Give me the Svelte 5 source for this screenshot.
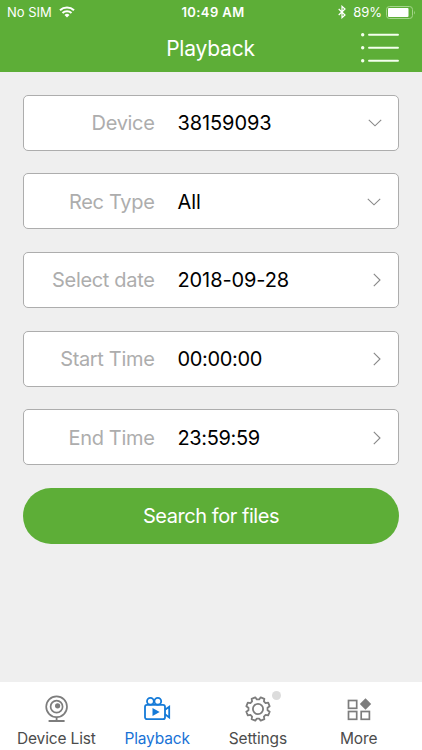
<script lang="ts">
  interface Field {
    label: string;
    value: string;
    kind: 'select' | 'date' | 'time';
  }

  const fields: Field[] = [
    { label: 'Device', value: '38159093', kind: 'select' },
    { label: 'Rec Type', value: 'All', kind: 'select' },
    { label: 'Select date', value: '2018-09-28', kind: 'date' },
    { label: 'Start Time', value: '00:00:00', kind: 'time' },
    { label: 'End Time', value: '23:59:59', kind: 'time' },
  ];

  const tabs = [
    { id: 'devices', label: 'Device List' },
    { id: 'playback', label: 'Playback' },
    { id: 'settings', label: 'Settings', badge: true },
    { id: 'more', label: 'More' },
  ];

  let active = $state('playback');

  // Outline of an eight-toothed gear centred on 14,14
  function gearPath() {
    const points: string[] = [];
    for (let i = 0; i < 8; i++) {
      const mid = 22.5 + i * 45;
      for (const [offset, r] of [[-15.5, 9.6], [-9.5, 12], [9.5, 12], [15.5, 9.6]]) {
        const a = ((mid + offset) * Math.PI) / 180;
        points.push(`${(14 + r * Math.cos(a)).toFixed(2)} ${(14 + r * Math.sin(a)).toFixed(2)}`);
      }
    }
    return `M${points.join('L')}Z`;
  }
</script>

<div class="screen">
  <header>
    <div class="status">
      <div class="carrier">
        <span>No SIM</span>
        <svg width="16" height="12" viewBox="0 0 16 12" fill="none" stroke="#fff" stroke-width="2.1">
          <path d="M1 4.2A10.3 10.3 0 0 1 15 4.2M3.5 7A6.6 6.6 0 0 1 12.5 7" />
          <path d="M8 11.5 5.5 9A3.6 3.6 0 0 1 10.5 9Z" fill="#fff" stroke="none" />
        </svg>
      </div>
      <span class="clock">10:49 AM</span>
      <div class="power">
        <svg width="8" height="14" viewBox="0 0 8 14" fill="none" stroke="#fff" stroke-width="1.2">
          <path d="M.7 4 7 10 4 12.7V1.3L7 4 .7 10" />
        </svg>
        <span>89%</span>
        <svg class="battery" width="30" height="13" viewBox="0 0 30 13">
          <rect x=".5" y=".5" width="26" height="12" rx="3" fill="none" stroke="#a4d58b" />
          <rect x="2" y="2" width="20.5" height="9" rx="1" fill="#fff" />
          <path d="M28 4.5q1.6 2 0 4Z" fill="#a4d58b" />
        </svg>
      </div>
    </div>
    <div class="title-bar">
      <h1>Playback</h1>
      <button class="menu" aria-label="Menu">
        <svg width="40" height="30" viewBox="0 0 40 30" stroke="#f4ffed" stroke-width="1.9" stroke-linecap="round">
          <path d="M9 1.7H38M9 14.7H38M9 27.7H38" />
          <path d="M2.7 1.7h.01M2.7 14.7h.01M2.7 27.7h.01" stroke-width="3.4" />
        </svg>
      </button>
    </div>
  </header>

  <main>
    {#each fields as field, i}
      <div class="field">
        <span class="label">{field.label}</span>
        <span class="value" class:time={field.kind === 'time'}>{field.value}</span>
        {#if field.kind === 'select'}
          <svg class="down" class:inset={i === 1} width="14" height="8" viewBox="0 0 14 8">
            <path d="M.8.8 7 6.8 13.2.8" />
          </svg>
        {:else}
          <svg width="8" height="14" viewBox="0 0 8 14">
            <path d="M.8.8 7 7 .8 13.2" />
          </svg>
        {/if}
      </div>
    {/each}
    <button class="search">Search for files</button>
  </main>

  <nav>
    {#each tabs as tab}
      <button class="tab" class:active={active === tab.id} onclick={() => (active = tab.id)}>
        <span class="icon">
          <svg width="28" height="28" viewBox="0 0 28 28" fill="none" stroke="currentColor" stroke-width="1.8">
            {#if tab.id === 'devices'}
              <circle cx="14.6" cy="11.7" r="10.4" stroke-width="1.7" />
              <circle cx="14.6" cy="11.7" r="6" stroke-width="1.7" />
              <circle cx="15.6" cy="10.8" r="2.6" fill="currentColor" stroke="none" />
              <path d="M14.6 22v4M6.6 26h16" />
            {:else if tab.id === 'playback'}
              <circle cx="7.4" cy="6.2" r="3.4" />
              <circle cx="14.8" cy="6.2" r="3.4" />
              <rect x="2" y="9.8" width="20" height="14.4" rx="2" />
              <path d="M22 14.8 26.2 11.8v10.6L22 19.2" />
              <path d="M9.5 12.9v8.2l7.2-4.1Z" fill="currentColor" stroke="none" />
            {:else if tab.id === 'settings'}
              <path d={gearPath()} stroke-linejoin="round" />
              <circle cx="14" cy="14" r="5.1" />
            {:else}
              <rect x="3.5" y="5.5" width="8.2" height="7.8" stroke-width="1.7" />
              <rect x="3.5" y="16.5" width="8.2" height="7.8" stroke-width="1.7" />
              <rect x="16.2" y="16.5" width="8.2" height="7.8" stroke-width="1.7" />
              <path d="M20.5 3.2 26.2 9l-5.7 5.8L14.8 9Z" fill="currentColor" stroke="none" />
            {/if}
          </svg>
          {#if tab.badge}
            <i class="badge"></i>
          {/if}
        </span>
        <span class="tab-label">{tab.label}</span>
      </button>
    {/each}
  </nav>
</div>

<style>
  :global(body) {
    background: #efefef;
  }

  .screen {
    width: 422px;
    height: 750px;
    display: flex;
    flex-direction: column;
    background: #efefef;
    font-family: Inter, "Liberation Sans", sans-serif;
    overflow: hidden;
  }

  button {
    padding: 0;
    border: 0;
    background: none;
    font: inherit;
  }

  svg {
    display: block;
    flex-shrink: 0;
  }

  header {
    height: 72px;
    flex-shrink: 0;
    background: #5dae37;
    color: #fff;
  }

  .status {
    height: 24px;
    padding: 0 7px;
    display: grid;
    grid-template-columns: 1fr auto 1fr;
    align-items: center;
    font-size: 13px;
  }

  .carrier, .power {
    display: flex;
    align-items: center;
    gap: 7px;
  }

  .clock {
    padding-left: 4px;
    font-weight: 600;
    letter-spacing: 0.4px;
  }

  .power {
    justify-content: flex-end;
    margin-right: -1px;
  }

  .battery {
    margin-left: -3px;
  }

  .title-bar {
    height: 48px;
    display: grid;
    grid-template-columns: 1fr auto 1fr;
    align-items: center;
  }

  h1 {
    grid-column: 2;
    margin: 0;
    padding-right: 1px;
    font-size: 21px;
    font-weight: 400;
    letter-spacing: -0.2px;
  }

  .menu {
    justify-self: end;
    margin-right: 22px;
  }

  main {
    flex: 1;
    padding: 22.7px 23px 0;
    display: flex;
    flex-direction: column;
    gap: 22.65px;
  }

  .field {
    height: 56px;
    box-sizing: border-box;
    padding: 0.6px 17px 0 0;
    display: flex;
    align-items: center;
    border: 1px solid #adadad;
    border-radius: 5px;
    background: #fff;
    font-size: 20px;
  }

  .label {
    width: 130.5px;
    margin-right: 23px;
    text-align: right;
    letter-spacing: -0.33px;
    color: #adadad;
  }

  .value {
    flex: 1;
    letter-spacing: -0.1px;
    color: #000;
  }

  .value.time {
    letter-spacing: -0.35px;
  }

  .field svg {
    fill: none;
    stroke: #888;
    stroke-width: 1.1;
  }

  .down {
    margin-right: -1px;
  }

  .down.inset {
    margin-right: 0;
  }

  .search {
    height: 56px;
    flex-shrink: 0;
    border-radius: 28px;
    background: #5dae37;
    color: #fff;
    font-size: 20px;
    letter-spacing: -0.45px;
  }

  nav {
    height: 68px;
    flex-shrink: 0;
    padding: 0 13px 0 6px;
    display: grid;
    grid-template-columns: repeat(4, 1fr);
    background: #fff;
  }

  .tab {
    display: flex;
    flex-direction: column;
    align-items: center;
    padding-top: 13px;
    color: #7d7d7d;
  }

  .icon {
    position: relative;
  }

  .badge {
    position: absolute;
    top: -4px;
    left: 28px;
    width: 9px;
    height: 9px;
    border-radius: 50%;
    background: #dcdcdc;
  }

  .tab-label {
    margin-top: 6px;
    font-size: 15.5px;
    line-height: 20px;
    letter-spacing: -0.15px;
    white-space: nowrap;
    color: #4c4c4c;
  }

  .tab.active {
    color: #147ad8;
  }

  .active .tab-label {
    color: #1972d6;
  }
</style>
